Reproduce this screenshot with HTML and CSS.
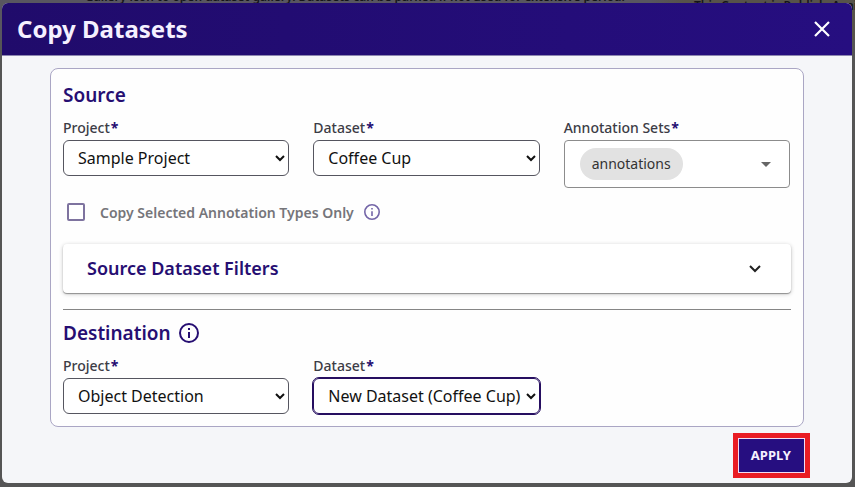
FILE: index.html
```html
<!DOCTYPE html>
<html lang="en">
<head>
<meta charset="utf-8">
<meta name="viewport" content="width=device-width, initial-scale=1">
<title>Copy Datasets</title>
<link rel="stylesheet" href="styles.css">
</head>
<body>
<div class="backdrop" aria-hidden="true">
  <p class="backdrop-main">Gallery icon to open dataset gallery. Datasets can be parked if not used for extensive period.</p>
  <p class="backdrop-side">This Content is Publicly Available</p>
</div>
<main class="dialog" role="dialog" aria-labelledby="dialog-title">
  <header class="dialog-header">
    <h1 class="dialog-title" id="dialog-title">Copy Datasets</h1>
    <button class="close" type="button" aria-label="Close">
      <svg width="18" height="18" viewBox="0 0 18 18"><path d="M2 2l14 14M16 2L2 16" fill="none" stroke="currentColor" stroke-width="2.2"/></svg>
    </button>
  </header>
  <form class="dialog-body">
    <div class="card">
      <section>
        <h2 class="section-title">Source</h2>
        <div class="fields">
          <div class="field">
            <label for="src-project">Project<span class="required">*</span></label>
            <select class="select" id="src-project"><option>Sample Project</option></select>
          </div>
          <div class="field">
            <label for="src-dataset">Dataset<span class="required">*</span></label>
            <select class="select" id="src-dataset"><option>Coffee Cup</option></select>
          </div>
          <div class="field">
            <label for="src-sets">Annotation Sets<span class="required">*</span></label>
            <button class="multiselect" id="src-sets" type="button" aria-haspopup="listbox">
              <span class="chip">annotations</span>
              <svg width="10" height="5" viewBox="0 0 10 5"><path d="M0 0h10L5 5z" fill="currentColor"/></svg>
            </button>
          </div>
        </div>
        <div class="option">
          <input class="checkbox" type="checkbox" id="selected-types">
          <label for="selected-types">Copy Selected Annotation Types Only</label>
          <svg class="info" width="16" height="16" viewBox="0 0 20 20"><circle cx="10" cy="10" r="9" fill="none" stroke="currentColor" stroke-width="2"/><path d="M9 5h2v2H9zM9 9h2v6H9z" fill="currentColor"/></svg>
        </div>
        <button class="filters" type="button" aria-expanded="false">
          <span>Source Dataset Filters</span>
          <svg width="12" height="8" viewBox="0 0 12 8"><path d="M1 1l5 5 5-5" fill="none" stroke="#222" stroke-width="2"/></svg>
        </button>
      </section>
      <hr class="divider">
      <section>
        <h2 class="section-title">Destination
          <svg width="20" height="20" viewBox="0 0 20 20"><circle cx="10" cy="10" r="9" fill="none" stroke="currentColor" stroke-width="2"/><path d="M9 5h2v2H9zM9 9h2v6H9z" fill="currentColor"/></svg>
        </h2>
        <div class="fields">
          <div class="field">
            <label for="dst-project">Project<span class="required">*</span></label>
            <select class="select" id="dst-project"><option>Object Detection</option></select>
          </div>
          <div class="field">
            <label for="dst-dataset">Dataset<span class="required">*</span></label>
            <select class="select select-active" id="dst-dataset"><option>New Dataset (Coffee Cup)</option></select>
          </div>
        </div>
      </section>
    </div>
    <div class="actions">
      <div class="highlight"><button class="apply" type="button">APPLY</button></div>
    </div>
  </form>
</main>
</body>
</html>
```
FILE: styles.css
```css
* {
  box-sizing: border-box;
}

body {
  margin: 0;
  padding: 3px 3px 4px 2px;
  background: #555;
  color: #3c3c46;
  font-family: "Noto Sans", "Open Sans", sans-serif;
  font-size: 14px;
}

button,
select {
  font-family: inherit;
}

svg {
  display: block;
  flex: none;
}

/* Page content dimmed behind the dialog */
.backdrop {
  position: absolute;
  top: 0;
  left: 0;
  right: 0;
  height: 40px;
  overflow: hidden;
  background: linear-gradient(to right, #585660 76%, #57534a 80%);
  color: #15151a;
  font-size: 12px;
  font-weight: 600;
  line-height: 16px;
  white-space: nowrap;
}

.backdrop p {
  position: absolute;
  margin: 0;
}

.backdrop-main {
  top: -11px;
  left: 85px;
}

.backdrop-side {
  top: -2px;
  left: 694px;
}

.dialog {
  position: relative;
  overflow: hidden;
  border-radius: 6px;
  background: #f5f6f9;
}

.dialog-header {
  display: flex;
  align-items: center;
  justify-content: space-between;
  height: 53px;
  padding: 0 21px 0 15px;
  border-bottom: 1px solid #8d87b0;
  background: linear-gradient(to right, #200b6b, #260e80);
  color: #f5f0ff;
}

.dialog-title {
  margin: 0;
  font-size: 24px;
  font-weight: 700;
  line-height: 32px;
}

.close {
  padding: 0;
  border: 0;
  background: none;
  color: #fff;
}

.dialog-body {
  padding: 12px 48px 5px;
}

.card {
  padding: 12px;
  border: 1px solid #aaa6c4;
  border-radius: 8px;
  background: #fefefe;
}

.section-title {
  display: flex;
  align-items: center;
  gap: 8px;
  margin: 0 0 10px;
  color: #260e72;
  font-size: 19px;
  font-weight: 600;
  line-height: 28px;
}

.fields {
  display: grid;
  grid-template-columns: repeat(3, 1fr);
  align-items: start;
  gap: 24px;
  padding-right: 1px;
}

.field {
  display: grid;
  gap: 4px;
  font-weight: 500;
  line-height: 17px;
}

.required {
  margin-left: 1px;
  color: #260e72;
  font-weight: 700;
}

.select {
  width: 100%;
  height: 36px;
  padding: 0 0 0 10px;
  border: 1px solid #55555f;
  border-radius: 6px;
  background: #fff;
  color: #111;
  font-size: 16px;
}

.select-active {
  outline: 1px solid #260e60;
  border-color: #260e60;
}

.multiselect {
  display: flex;
  align-items: center;
  justify-content: space-between;
  height: 48px;
  padding: 0 18px 0 15px;
  border: 1px solid #8c8c8c;
  border-radius: 4px;
  background: #fff;
  color: #666;
}

.chip {
  padding: 0 12px;
  border-radius: 16px;
  background: #e2e2e2;
  color: #333;
  font-size: 14px;
  line-height: 32px;
}

.option {
  display: flex;
  align-items: center;
  height: 48px;
  padding-left: 4px;
  color: #75757a;
  font-weight: 600;
}

.checkbox {
  width: 18px;
  height: 18px;
  margin: 0 15px 0 0;
  border: 2px solid #7e739f;
  border-radius: 2px;
  background: #fff;
  appearance: none;
}

.info {
  margin-left: 10px;
  color: #7466a8;
}

.filters {
  display: flex;
  align-items: center;
  justify-content: space-between;
  width: 100%;
  margin-top: 8px;
  padding: 0 30px 0 24px;
  border: 0;
  border-radius: 4px;
  background: #fff;
  box-shadow: 0 1px 1px rgba(0, 0, 0, 0.35), 0 1px 4px rgba(0, 0, 0, 0.22);
  color: #260e72;
  font-size: 18px;
  font-weight: 600;
  line-height: 49px;
}

.divider {
  height: 1px;
  margin: 16px 0 9px;
  border: 0;
  background: #858585;
}

.actions {
  display: flex;
  justify-content: flex-end;
  margin: 6px -6px 0 0;
}

.highlight {
  padding: 1px;
  border: 5px solid #e91c24;
  background: #f1dcf5;
}

.apply {
  display: block;
  padding: 0 13px 0 12px;
  border: 0;
  background: #260e80;
  color: #f5f0ff;
  font-size: 13px;
  font-weight: 700;
  line-height: 33px;
}
```
